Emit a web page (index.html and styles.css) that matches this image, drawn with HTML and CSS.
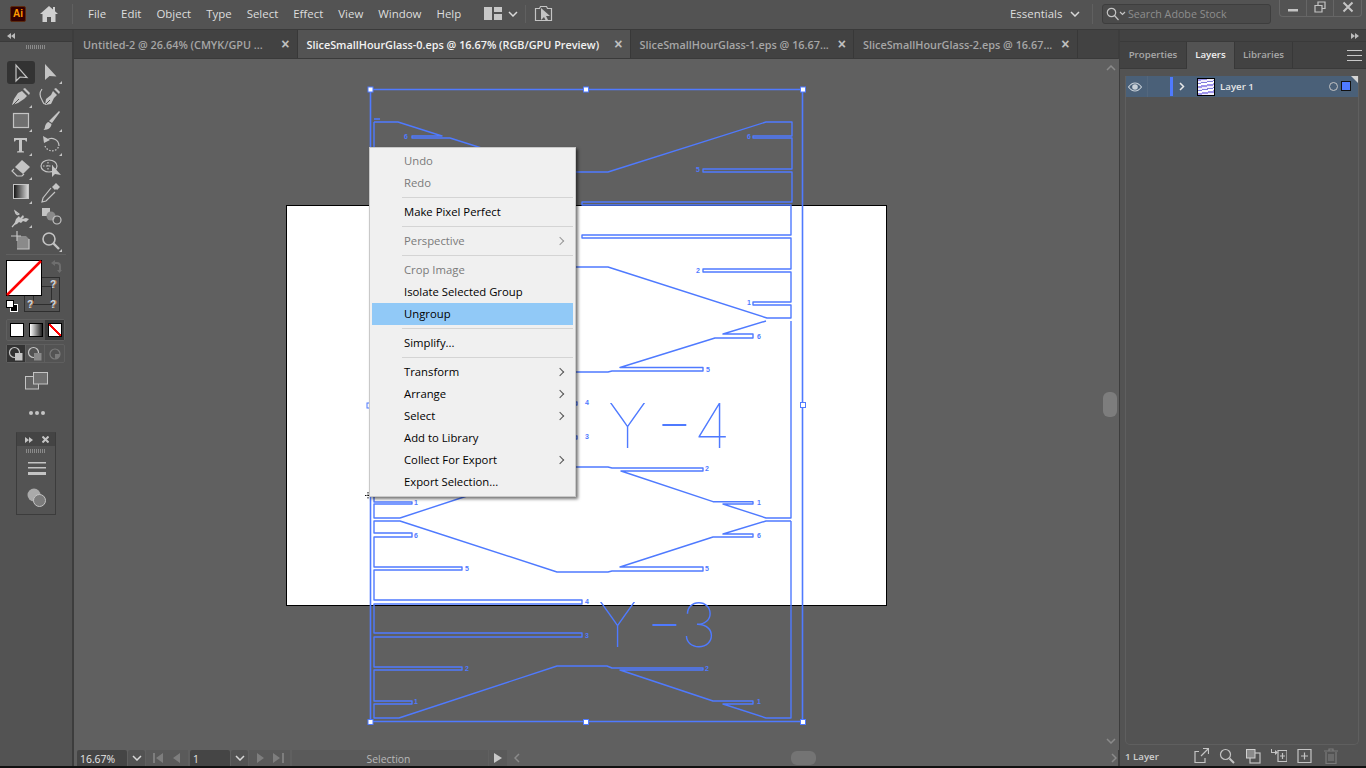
FILE: index.html
```html
<!DOCTYPE html>
<html lang="en">
<head>
<meta charset="utf-8">
<title>Adobe Illustrator</title>
<link rel="stylesheet" href="styles.css">
</head>
<body>
<div class="app">
  <header class="topbar">
    <div class="ai-logo">Ai</div>
    <svg class="home" width="18" height="16" viewBox="0 0 18 16"><path d="M9 0 0 8h2.500v8h4.500v-5h4v5h4.500V8H18l-3-2.700V1h-2v2.500z"/></svg>
    <div class="vsep first"></div>
    <nav class="menubar">
      <span>File</span><span>Edit</span><span>Object</span><span>Type</span><span>Select</span><span>Effect</span><span>View</span><span>Window</span><span>Help</span>
    </nav>
    <svg class="wsp" width="18" height="13" viewBox="0 0 18 13"><path d="M0 0h8v13H0zM10 0h8v5h-8zM10 7h8v6h-8z"/></svg>
    <svg class="chev wsp-chev" width="10" height="6" viewBox="0 0 10 6"><path d="M1 1l4 4 4-4"/></svg>
    <div class="vsep arr-sep"></div>
    <svg class="arr" width="19" height="17" viewBox="0 0 19 17"><path class="ln" d="M1.500 3.500h4l1-2h6l1 2h4v12h-16z"/><path class="fl" d="M7 3l0 12 3-3 2 4 2-1-2-4h4z"/></svg>
    <div class="top-right">
      <span class="essentials">Essentials</span>
      <svg class="chev" width="10" height="6" viewBox="0 0 10 6"><path d="M1 1l4 4 4-4"/></svg>
      <div class="vsep ess-sep"></div>
      <div class="search">
        <svg width="20" height="14" viewBox="0 0 20 14"><circle cx="5.500" cy="5.500" r="4.200" class="ln"/><path class="ln" d="M8.500 8.500l4 4.500M14 5l2.500 2.500L19 5"/></svg>
        <span>Search Adobe Stock</span>
      </div>
      <div class="winbtns">
        <div class="winbtn"><svg width="12" height="12" viewBox="0 0 12 12"><path d="M1 8h10v2.500H1z"/></svg></div>
        <div class="winbtn"><svg width="12" height="12" viewBox="0 0 12 12"><path class="ln" d="M1 4.500h7v6.500H1zM4 4V1h7v6.500H8.500"/></svg></div>
        <div class="winbtn"><svg width="12" height="12" viewBox="0 0 12 12"><path class="ln thick" d="M1.500 1.500l9 9M10.500 1.500l-9 9"/></svg></div>
      </div>
    </div>
  </header>

  <div class="work">
    <aside class="tools">
      <div class="strip"><svg width="8" height="6" viewBox="0 0 8 6"><path d="M4 0v6L0 3zM8 0v6L4 3z"/></svg></div>
      <div class="grip"></div>
      <div class="toolgrid">
        <div class="tool sel"><svg width="24" height="24" viewBox="0 0 24 24"><path class="ln" d="M7 4V20l4-4 7 .5z"/></svg></div>
        <div class="tool"><svg width="24" height="24" viewBox="0 0 24 24"><path d="M6 3v16l4.500-4 7 .5z"/><path class="tri" d="M23 23h-3l3-3z"/></svg></div>
        <div class="tool"><svg width="24" height="24" viewBox="0 0 24 24"><path d="M13 6l5 5-3 3-6 4-6 2 2-6 4-6zM14 4l2-1 5 5-1 2z"/><path class="cut" d="M4 20l6-6"/><path class="tri" d="M23 23h-3l3-3z"/></svg></div>
        <div class="tool"><svg width="24" height="24" viewBox="0 0 24 24"><path d="M14 6l4 4-3 3-3 6-6 1 1-6 5-4zM15 4l2-1 4 4-1 2z"/><path class="cut" d="M7 19l4-4"/><path class="ln" d="M3 4C0 8 1 12 3 15c1 2 1 4 3 4"/></svg></div>
        <div class="tool"><svg width="24" height="24" viewBox="0 0 24 24"><rect x="4.500" y="4.500" width="15" height="14" class="rectfill"/><path class="tri" d="M23 23h-3l3-3z"/></svg></div>
        <div class="tool"><svg width="24" height="24" viewBox="0 0 24 24"><path d="M20 2l1 1-8 11-3-2zM9.500 13l3 2c0 3-3 6-8 6 2-2 1-3 2-5 .5-1.500 2-3 3-3z"/><path class="tri" d="M23 23h-3l3-3z"/></svg></div>
        <div class="tool"><svg width="24" height="24" viewBox="0 0 24 24"><path d="M5 5h13v3.500h-1l-1-1.500h-3v11l2 .5v1H8v-1l2-.5V7H7L6 8.500H5z"/><path class="tri" d="M23 23h-3l3-3z"/></svg></div>
        <div class="tool"><svg width="24" height="24" viewBox="0 0 24 24"><path class="ln dots" d="M6 13a7.500 7.500 0 0 0 14 0"/><path class="ln" d="M20 13a7.500 7.500 0 0 0-12-6"/><path d="M4 3l1 7 6-3z"/><path class="tri" d="M23 23h-3l3-3z"/></svg></div>
        <div class="tool"><svg width="24" height="24" viewBox="0 0 24 24"><path d="M13 3l8 7-7 7-8-7z"/><path class="ln" d="M5 12l-2 2 5 5h5l2-2"/><path class="tri" d="M23 23h-3l3-3z"/></svg></div>
        <div class="tool"><svg width="24" height="24" viewBox="0 0 24 24"><ellipse class="ln" cx="10" cy="9" rx="8" ry="6"/><path class="ln dots" d="M9 5v8M4 9h10"/><path d="M13 8v12l3-3 6 1z"/></svg></div>
        <div class="tool"><svg width="24" height="24" viewBox="0 0 24 24"><defs><linearGradient id="g1"><stop offset="0" stop-color="#111"/><stop offset="1" stop-color="#ddd"/></linearGradient></defs><rect x="4.500" y="3.500" width="15" height="14" fill="url(#g1)" class="frame"/><path class="tri" d="M23 23h-3l3-3z"/></svg></div>
        <div class="tool"><svg width="24" height="24" viewBox="0 0 24 24"><path d="M17 2l4 4-3 3-1-1-1 1-3-3 1-1z"/><path class="ln" d="M12 7L4 17l-1 4 4-1 9-9"/></svg></div>
        <div class="tool"><svg width="24" height="24" viewBox="0 0 24 24"><path d="M5 20l2-6 3-3 1 2 3-3 1 2-2 2 4-1 3 1-3 3-3-1-2 2-2-1-2 2z"/><path class="ln" d="M3 22l8-9M6 6l4 3c-1 1-3 1-4-3z"/><path class="tri" d="M23 23h-3l3-3z"/></svg></div>
        <div class="tool"><svg width="24" height="24" viewBox="0 0 24 24"><rect x="3" y="3" width="8" height="8"/><circle cx="12" cy="11" r="4.500" class="soft"/><circle cx="18" cy="15" r="4" class="ln"/></svg></div>
        <div class="tool"><svg width="24" height="24" viewBox="0 0 24 24"><path class="soft" d="M8 7h9l3 3v10H8z"/><path class="ln" d="M8 2v10M2 7h10M8 20h12V10"/></svg></div>
        <div class="tool"><svg width="24" height="24" viewBox="0 0 24 24"><circle class="ln wide" cx="10" cy="10" r="6"/><path class="ln wide2" d="M14.500 14.500L20 20"/><path class="tri" d="M23 23h-3l3-3z"/></svg></div>
      </div>
      <div class="hr"></div>
      <div class="fillstroke">
        <div class="fillbox"><svg width="36" height="36" viewBox="0 0 36 36"><rect x=".5" y=".5" width="35" height="35" fill="#fff" stroke="#000"/><path d="M1 35L35 1" stroke="#f00" stroke-width="2.500"/></svg></div>
        <div class="strokebox"><span class="q q1">?</span><span class="q q2">?</span><span class="q q3">?</span></div>
        <svg class="swap" width="12" height="13" viewBox="0 0 12 13"><path d="M5 0v2h2c3 0 4 2 4 4v4h1l-2.500 3L7 10h2V6c0-1-1-2-2-2H5v2L1 3z"/></svg>
        <svg class="defaults" width="12" height="12" viewBox="0 0 12 12"><rect x="4.500" y="4.500" width="7" height="7" fill="#000" stroke="#fff"/><rect x=".5" y=".5" width="7" height="7" fill="#fff" stroke="#000"/></svg>
      </div>
      <div class="swatches">
        <div class="sw"><i class="white"></i></div>
        <div class="sw"><i class="grad"></i></div>
        <div class="sw on"><i class="none"></i></div>
      </div>
      <div class="modes">
        <div class="mode on"><svg width="16" height="16" viewBox="0 0 16 16"><circle cx="6.500" cy="6.500" r="5" class="ln"/><rect x="7" y="7" width="7.500" height="7.500"/></svg></div>
        <div class="mode"><svg width="16" height="16" viewBox="0 0 16 16"><circle cx="6.500" cy="6.500" r="5" class="ln"/><rect x="7" y="7" width="7.500" height="7.500" class="soft"/></svg></div>
        <div class="mode dim"><svg width="16" height="16" viewBox="0 0 16 16"><circle cx="8" cy="8" r="5" class="ln"/><path d="M8 8h5a5 5 0 0 1-5 5z"/></svg></div>
      </div>
      <svg class="screen" width="24" height="18" viewBox="0 0 24 18"><rect x=".5" y="4.500" width="13" height="12.500" class="frame2"/><rect x="8.500" y=".5" width="14" height="11.500" class="screenfill"/></svg>
      <div class="dots"><i></i><i></i><i></i></div>
      <div class="mini">
        <div class="mini-h">
          <svg width="8" height="6" viewBox="0 0 8 6"><path d="M0 0v6l4-3zM4 0v6l4-3z"/></svg>
          <svg width="7" height="7" viewBox="0 0 7 7"><path class="ln thick" d="M.5.500l6 6M6.500.500l-6 6"/></svg>
        </div>
        <div class="grip mini-grip"></div>
        <svg class="mini-ic" width="18" height="13" viewBox="0 0 18 13"><path d="M0 0h18v1.500H0zM0 5h18v1.500H0zM0 10h18v3H0z"/></svg>
        <svg class="mini-ic2" width="20" height="20" viewBox="0 0 20 20"><circle cx="7" cy="7" r="6.500"/><circle cx="12.500" cy="12.500" r="6" class="overlap"/></svg>
      </div>
    </aside>

    <main class="center">
      <div class="tabs">
        <div class="tab">
          <span>Untitled-2 @ 26.64% (CMYK/GPU ...</span><b>×</b>
        </div>
        <div class="tab active">
          <span>SliceSmallHourGlass-0.eps @ 16.67% (RGB/GPU Preview)</span><b>×</b>
        </div>
        <div class="tab">
          <span>SliceSmallHourGlass-1.eps @ 16.67...</span><b>×</b>
        </div>
        <div class="tab">
          <span>SliceSmallHourGlass-2.eps @ 16.67...</span><b>×</b>
        </div>
      </div>
      <div class="stage">
        <div class="canvas">
          <svg class="art" width="1029" height="691" viewBox="74 59 1029 691">
            <rect x="286.500" y="205.500" width="600" height="400" fill="#fff" stroke="#000"/>
            <g class="wire">
              <path d="M374 119H380M374 122H398L442 136H412V138H450L557 172H608L766 122H792V136H753V138H792V169H703V172H792V202H582V205H791V235H582V238H791V269H703V272H791V302H753V305H791V318H767L608 267H557"/>
              <path d="M766 321L723 334H753V338H715L620 367.500H703V371H612L608 372H557"/>
              <path d="M374 402H577V405H374M374 436H577V439H374"/>
              <path d="M557 467H608L612 468H703V471H621L713 501.700H753V504H723L766 518H791V321"/>
              <path d="M791 521H766L723 534H753V537H713L620 567H703V571H612L608 572H557L400 521H374V533H412V537H374V567H462V570H374V600H582V604H374V633H582V637H374V667H462V670H374V701H412V704H374V718H399L557 666H607L612 668H703V670H620L713 701H753V704H723L766 718H791V521"/>
              <path d="M400 518H374V504H412V502H374V122M400 518L470 495"/>
              <rect x="370.500" y="89.500" width="432" height="632" class="bbox"/>
            </g>
            <g class="handles">
              <rect x="368" y="87" width="5" height="5"/><rect x="583.500" y="87" width="5" height="5"/><rect x="800.500" y="87" width="5" height="5"/>
              <rect x="367" y="403" width="4" height="5"/><rect x="800.500" y="402.500" width="5" height="5"/>
              <rect x="368" y="719.500" width="5" height="5"/><rect x="583.500" y="719.500" width="5" height="5"/><rect x="800.500" y="719.500" width="5" height="5"/>
            </g>
            <text class="big"><tspan x="608" y="448">Y</tspan><tspan class="dash" x="655" y="452">-</tspan><tspan x="694" y="448">4</tspan></text>
            <text class="big"><tspan x="598" y="647">Y</tspan><tspan class="dash" x="645" y="652">-</tspan><tspan x="681" y="647">3</tspan></text>
            <g class="digits">
              <text x="404" y="139">6</text><text x="747" y="139">6</text><text x="696" y="172">5</text><text x="696" y="273">2</text><text x="747" y="305">1</text><text x="757" y="339">6</text><text x="706" y="372">5</text><text x="585" y="405">4</text><text x="585" y="439">3</text><text x="705" y="471">2</text><text x="757" y="505">1</text><text x="414" y="505">1</text><text x="414" y="538">6</text><text x="757" y="538">6</text><text x="465" y="571">5</text><text x="705" y="571">5</text><text x="585" y="604">4</text><text x="585" y="638">3</text><text x="465" y="671">2</text><text x="705" y="671">2</text><text x="414" y="704">1</text><text x="757" y="704">1</text>
            </g>
            <path class="cursor" d="M368 492v7M365 495.500h6"/>
          </svg>
          <div class="ctxmenu">
            <div class="mi off">Undo</div>
            <div class="mi off">Redo</div>
            <div class="ms"></div>
            <div class="mi">Make Pixel Perfect</div>
            <div class="ms"></div>
            <div class="mi off sub">Perspective</div>
            <div class="ms"></div>
            <div class="mi off">Crop Image</div>
            <div class="mi">Isolate Selected Group</div>
            <div class="mi hot">Ungroup</div>
            <div class="ms"></div>
            <div class="mi">Simplify...</div>
            <div class="ms"></div>
            <div class="mi sub">Transform</div>
            <div class="mi sub">Arrange</div>
            <div class="mi sub">Select</div>
            <div class="mi">Add to Library</div>
            <div class="mi sub">Collect For Export</div>
            <div class="mi">Export Selection...</div>
          </div>
        </div>
        <div class="vscroll">
          <svg class="chev dim" width="10" height="6" viewBox="0 0 10 6"><path d="M1 5l4-4 4 4"/></svg>
          <div class="vthumb"></div>
          <svg class="chev dim" width="10" height="6" viewBox="0 0 10 6"><path d="M1 1l4 4 4-4"/></svg>
        </div>
      </div>
      <footer class="status">
        <div class="field zoom">16.67%</div>
        <div class="cbtn"><svg class="chev" width="10" height="6" viewBox="0 0 10 6"><path d="M1 1l4 4 4-4"/></svg></div>
        <div class="pager"><svg width="30" height="10" viewBox="0 0 30 10"><path d="M1 0h2v10H1zM11 0v10L4 5zM28 0v10l-7-5z"/></svg></div>
        <div class="field page">1</div>
        <div class="cbtn"><svg class="chev" width="10" height="6" viewBox="0 0 10 6"><path d="M1 1l4 4 4-4"/></svg></div>
        <div class="pager next"><svg width="30" height="10" viewBox="0 0 30 10"><path d="M2 0v10l7-5zM18 0v10l7-5zM27 0h2v10h-2z"/></svg></div>
        <div class="selname">Selection</div>
        <div class="playbtn"><svg width="8" height="10" viewBox="0 0 8 10"><path d="M0 0v10l8-5z"/></svg></div>
        <div class="hscroll">
          <svg class="chev dim" width="6" height="10" viewBox="0 0 6 10"><path d="M5 1L1 5l4 4"/></svg>
          <div class="hthumb"></div>
          <svg class="chev dim" width="6" height="10" viewBox="0 0 6 10"><path d="M1 1l4 4-4 4"/></svg>
        </div>
      </footer>
    </main>

    <aside class="dock">
      <div class="strip right"><svg width="8" height="6" viewBox="0 0 8 6"><path d="M0 0v6l4-3zM4 0v6l4-3z"/></svg></div>
      <div class="dtabs">
        <div class="dtab first-tab">Properties</div>
        <div class="dtab active">Layers</div>
        <div class="dtab last-tab">Libraries</div>
        <svg class="dmenu" width="15" height="11" viewBox="0 0 15 11"><path d="M0 0h15v1H0zM0 5h15v1H0zM0 10h15v1H0z"/></svg>
      </div>
      <div class="dbody">
        <div class="layers">
          <div class="layer">
            <svg class="eye" width="14" height="10" viewBox="0 0 14 10"><path d="M7 1C4 1 2 3 .5 5 2 7 4 9 7 9s5-2 6.500-4C12 3 10 1 7 1z" class="eye1"/><circle cx="7" cy="5" r="2.800"/></svg>
            <i class="cell"></i>
            <i class="lbar"></i>
            <svg class="lchev" width="6" height="9" viewBox="0 0 6 9"><path d="M1 1l3.500 3.500L1 8"/></svg>
            <i class="thumb"></i>
            <span class="lname">Layer 1</span>
            <i class="target"></i>
            <i class="selbox"></i>
          </div>
        </div>
        <div class="dfoot">
          <span>1 Layer</span>
          <div class="dicons">
            <svg width="16" height="16" viewBox="0 0 16 16"><path class="ln" d="M6 3.500H2v11h10V10M8 8l7-7M10 .5h5.500V6"/></svg>
            <svg width="16" height="16" viewBox="0 0 16 16"><circle cx="6.500" cy="6.500" r="5" class="ln"/><path class="ln thick" d="M10.500 10.500L15 15"/></svg>
            <svg width="16" height="16" viewBox="0 0 16 16"><rect x="5" y="5" width="10" height="10" class="ln"/><rect x="1.500" y="1.500" width="8.500" height="8.500" class="darkfill"/></svg>
            <svg width="16" height="16" viewBox="0 0 16 16"><path class="ln" d="M7 2.500h9v11H7zM11.500 5v6M9 8h5M0 1.500v0"/><path d="M0 1h1v3h3V2l3 2.500L4 7V5H0z"/></svg>
            <svg width="16" height="16" viewBox="0 0 16 16"><path class="ln" d="M1 1.500h13v13H1zM7.500 4.500v7M4 8h7"/></svg>
            <svg class="trash" width="16" height="16" viewBox="0 0 16 16"><path class="ln" d="M3 4v11.500h10V4M1 3h14M6 3V1h4v2M6 6v7M8 6v7M10 6v7"/></svg>
          </div>
        </div>
      </div>
    </aside>
  </div>
  <div class="baseline"></div>
</div>
</body>
</html>
```
FILE: styles.css
```css
* { box-sizing: border-box; margin: 0; padding: 0; }
html, body { width: 1366px; height: 768px; overflow: hidden; background: #535353; }
body { font-family: "Open Sans", "Noto Sans", "Liberation Sans", sans-serif; font-size: 11.5px; color: #ddd; }
svg { display: block; flex: none; fill: #c4c4c4; }
i { display: block; }
.ln { fill: none; stroke: #c4c4c4; stroke-width: 1.2; }
.fl { fill: #c4c4c4; }
.thick { stroke-width: 2; }
.chev { fill: none; stroke: #d8d8d8; stroke-width: 1.500; }
.chev.dim { stroke: #8a8a8a; }

.app { width: 1366px; height: 768px; display: grid; grid-template-rows: 30px 736px 2px; }
.baseline { background: #111; }

.topbar { display: flex; align-items: center; height: 30px; background: #535353; border-bottom: 1px solid #3a3a3a; position: relative; padding: 0 0 2px 10px; }
.ai-logo { width: 16px; height: 16px; background: #330000; border: 1px solid #5a2a10; border-radius: 2px; color: #ff9a00; font: bold 10px/14px "Liberation Sans", sans-serif; text-align: center; }
.home { margin-left: 14px; fill: #cfcfcf; }
.vsep { width: 1px; height: 20px; background: #606060; }
.vsep.first { margin-left: 14px; }
.menubar { display: flex; gap: 15px; margin-left: 15px; font-size: 11.450px; color: #dedede; width: 386px; }
.wsp { margin-left: 10px; fill: #c8c8c8; }
.wsp-chev { margin-left: 6px; }
.arr-sep { margin-left: 7px; height: 18px; }
.arr { margin-left: 8px; }
.top-right { margin-left: auto; display: flex; align-items: center; }
.essentials { font-size: 11.450px; color: #dedede; width: 60px; }
.top-right .chev { margin-left: 0; }
.ess-sep { margin-left: 12px; }
.search { margin-left: 9px; width: 169px; height: 20px; background: #4a4a4a; border: 1px solid #3e3e3e; border-radius: 3px; display: flex; align-items: center; padding-left: 3px; gap: 2px; color: #8e8e8e; font-size: 10.700px; }
.winbtns { margin: -12px 4px 0 8px; display: flex; height: 18px; border: 1px solid #666; border-top: 0; border-radius: 0 0 4px 4px; }
.winbtn { width: 27px; display: flex; align-items: center; justify-content: center; border-right: 1px solid #666; }
.winbtn:last-child { border-right: 0; }

.work { display: flex; height: 736px; }

.tools { width: 74px; flex: none; background: #535353; border-right: 2px solid #3d3d3d; position: relative; }
.strip { height: 12px; background: #424242; border-bottom: 1px solid #3a3a3a; display: flex; align-items: center; padding-left: 7px; }
.strip svg { fill: #bbb; }
.strip.right { justify-content: flex-end; padding-right: 7px; }
.grip { width: 20px; height: 4px; margin: 3px auto 0; background: repeating-linear-gradient(90deg, #8a8a8a 0 1px, transparent 1px 2px); }
.toolgrid { display: grid; grid-template-columns: 30px 30px; grid-auto-rows: 24px; margin: 12px 0 0 6px; }
.tool { display: flex; align-items: center; justify-content: center; position: relative; }
.tool.sel::before { content: ""; position: absolute; left: 1px; top: 0; width: 28px; height: 23px; background: #333; border-radius: 3px; }
.tool svg { position: relative; }
.tri { fill: #c4c4c4; }
.cut { fill: none; stroke: #535353; stroke-width: 1; }
.ln.dots { stroke-dasharray: 1.500 1.500; }
.rectfill { fill: #707070; stroke: #c4c4c4; stroke-width: 1.200; }
.frame { stroke: #c4c4c4; stroke-width: 1; }
.soft { fill: #8a8a8a; }
.wide { stroke-width: 1.600; }
.wide2 { stroke-width: 2.400; }
.hr { height: 1px; margin: 1px 6px 0; background: #606060; }

.fillstroke { position: relative; height: 57px; margin-top: 5px; }
.fillbox { position: absolute; left: 6px; top: 0; z-index: 1; }
.strokebox { position: absolute; left: 24px; top: 17px; width: 36px; height: 35px; border: 1px solid #2e2e2e; }
.strokebox::before { content: ""; position: absolute; left: 8px; top: 8px; width: 17px; height: 17px; border: 1px solid #2e2e2e; }
.q { position: absolute; font: bold 10px/10px "Liberation Sans", sans-serif; color: #c9d6e8; text-shadow: 1px 0 #b37b4b; }
.q1 { right: 3px; top: 2px; }
.q2 { left: 2px; bottom: 1px; }
.q3 { right: 3px; bottom: 1px; }
.swap { position: absolute; left: 50px; top: 0; fill: #6e6e6e; }
.defaults { position: absolute; left: 6px; top: 40px; }

.swatches, .modes { display: grid; grid-template-columns: repeat(3, 1fr); margin-left: 6px; width: 59px; border: 1px solid #5f5f5f; border-radius: 2px; }
.swatches { height: 22px; margin-top: 2px; }
.sw { display: flex; align-items: center; justify-content: center; }
.sw.on { background: #3a3a3a; }
.sw i { width: 14px; height: 14px; border: 1px solid #000; }
.white { background: #fff; }
.grad { background: linear-gradient(90deg, #fff, #222); }
.none { background: linear-gradient(to top right, #fff 0 42%, #f00 42% 58%, #fff 58%); }
.modes { height: 19px; margin-top: 3px; }
.mode { display: flex; align-items: center; justify-content: center; border-right: 1px solid #5f5f5f; }
.mode:last-child { border-right: 0; }
.mode.on { background: #333; }
.mode.dim svg { opacity: .35; }
.screen { margin: 9px 0 0 25px; }
.frame2 { fill: #636363; stroke: #c4c4c4; }
.screenfill { fill: #707070; stroke: #c4c4c4; }
.dots { display: flex; gap: 2px; justify-content: center; margin: 21px 0 0 1px; }
.dots i { width: 4px; height: 4px; border-radius: 50%; background: #c4c4c4; }
.mini { width: 40px; height: 83px; margin: 17px 0 0 16px; border: 1px solid #3c3c3c; border-top-color: #444; background: #535353; position: relative; }
.mini-h { height: 13px; background: #444; display: flex; align-items: center; justify-content: space-between; padding: 0 6px 0 8px; }
.mini-h svg { fill: #c4c4c4; }
.mini-grip { margin-top: 3px; }
.mini-ic { margin: 9px 0 0 11px; }
.mini-ic2 { margin: 13px 0 0 10px; fill: #aaa; }
.overlap { fill: #7c7c7c; stroke: #c4c4c4; }

.center { width: 1045px; flex: none; display: flex; flex-direction: column; }
.tabs { height: 29px; flex: none; display: flex; background: #424242; border-bottom: 1px solid #3a3a3a; }
.tab { height: 28px; width: 223.500px; padding: 0 7px 0 9px; display: flex; align-items: center; justify-content: space-between; border-right: 1px solid #383838; color: #a6a6a6; font-weight: 600; font-size: 10.850px; white-space: nowrap; }
.tab.active { width: 333px; background: #535353; color: #f2f2f2; }
.tab b { font: bold 14px/14px "Liberation Sans", sans-serif; color: #c0c0c0; }
.stage { flex: 1; display: flex; min-height: 0; }
.canvas { width: 1029px; flex: none; background: #606060; position: relative; overflow: hidden; }
.art { position: absolute; left: 0; top: 0; }
.wire path, .wire .bbox { fill: none; stroke: #4f7aff; stroke-width: 1.400; stroke-linejoin: round; }
.wire .bbox { stroke-width: 1.600; }
.handles rect { fill: #fff; stroke: #4f7aff; stroke-width: 1; }
.big { font-family: Inter, "Open Sans", sans-serif; font-weight: 100; font-size: 61px; fill: #4f7aff; }
.big .dash { font-size: 88px; }
.digits text { font: bold 7px "Liberation Sans", sans-serif; fill: #4f7aff; }
.cursor { fill: none; stroke: #111; stroke-width: 1; stroke-dasharray: 1.500 1; }

.ctxmenu { position: absolute; left: 295px; top: 88px; width: 207px; height: 350px; padding: 2px; background: #f0f0f0; border: 1px solid #c9c9c9; box-shadow: 2px 2px 3px rgba(0,0,0,.55); color: #000; font-size: 11.300px; }
.mi { height: 22px; line-height: 22px; padding-left: 32px; position: relative; white-space: nowrap; }
.mi.off { color: #7a7a7a; }
.mi.hot { background: #91c9f7; }
.mi.sub::after { content: ""; position: absolute; right: 10px; top: 8px; width: 5px; height: 5px; border-top: 1.200px solid #555; border-right: 1.200px solid #555; transform: rotate(45deg); }
.mi.off.sub::after { border-color: #999; }
.ms { height: 7px; margin-left: 30px; position: relative; }
.ms::before { content: ""; position: absolute; left: 0; right: 0; top: 3px; height: 1px; background: #d4d4d4; }

.vscroll { flex: 1; background: #606060; display: flex; flex-direction: column; align-items: center; justify-content: space-between; padding: 6px 0; position: relative; }
.vthumb { position: absolute; left: 0; top: 333px; width: 14px; height: 25px; border-radius: 6px; background: #7d7d7d; }

.status { height: 16px; flex: none; display: flex; background: #606060; padding-left: 3px; gap: 1px; align-items: stretch; font-size: 10.400px; }
.field { background: #454545; color: #e8e8e8; padding-left: 3px; line-height: 19px; border-radius: 2px 2px 0 0; }
.zoom { width: 50px; }
.page { width: 40px; margin-left: 1px; }
.cbtn { width: 17px; background: #535353; display: flex; align-items: center; justify-content: center; border-radius: 2px 2px 0 0; }
.pager { width: 42px; background: #5a5a5a; padding: 3px 0 0 6px; }
.pager.next { margin-left: 0; width: 41px; }
.pager svg { fill: #7e7e7e; }
.selname { width: 196px; margin-left: 1px; background: #5a5a5a; text-align: center; color: #b8b8b8; line-height: 19px; padding-right: 3px; }
.playbtn { width: 18px; background: #5a5a5a; display: flex; align-items: center; justify-content: center; }
.playbtn svg { fill: #c8c8c8; }
.hscroll { flex: 1; display: flex; align-items: center; justify-content: space-between; padding: 0 2px 0 6px; position: relative; }
.hthumb { position: absolute; left: 283px; top: 1px; width: 25px; height: 14px; border-radius: 6px; background: #747474; }

.dock { flex: 1; background: #535353; border-left: 2px solid #3d3d3d; margin-left: -1px; display: flex; flex-direction: column; }
.dtabs { height: 27px; flex: none; display: flex; background: #424242; position: relative; border-bottom: 1px solid #3a3a3a; }
.dtab { width: 48px; text-align: center; line-height: 26px; border-right: 1px solid #383838; color: #a8a8a8; font-weight: 600; font-size: 9.700px; }
.first-tab { width: 67px; }
.last-tab { width: 58px; }
.dtab.active { background: #535353; color: #f0f0f0; height: 27px; }
.dmenu { position: absolute; right: 4px; top: 8px; fill: #c8c8c8; }
.dbody { flex: 1; display: flex; flex-direction: column; padding: 7px 7px 0 5px; }
.layers { flex: 1; border: 1px solid #5f5f5f; border-top: 0; border-radius: 0 0 5px 5px; }
.layer { height: 21px; background: #4a6078; display: flex; align-items: center; position: relative; }
.eye { margin-left: 2px; fill: #c8d0d8; }
.eye1 { fill: none; stroke: #c8d0d8; stroke-width: 1.200; }
.cell { width: 1px; height: 21px; background: #53677d; margin-left: 5px; }
.lbar { width: 3px; height: 19px; background: #4f7aff; margin-left: 22px; }
.lchev { margin-left: 6px; fill: none; stroke: #e8e8e8; stroke-width: 1.500; }
.thumb { width: 18px; height: 18px; margin-left: 12px; border: 1px solid #000; background: repeating-linear-gradient(170deg, #9d93ea 0 2px, #f2eefc 2px 4px, #7f7cdc 4px 5px, #fff 5px 7px); }
.lname { margin-left: 5px; font-size: 9.700px; font-weight: 600; color: #e6e6e6; }
.target { position: absolute; right: 20px; top: 6px; width: 9px; height: 9px; border: 1px solid #c4c4c4; border-radius: 50%; }
.selbox { position: absolute; right: 8px; top: 5px; width: 8px; height: 8px; margin-top: 1px; background: #4f7aff; outline: 1px solid #111; }
.layer::after { content: ""; position: absolute; right: 0; top: 0; border-top: 7px solid #d4d4d4; border-left: 7px solid transparent; }
.dfoot { height: 20px; flex: none; display: flex; align-items: center; font-size: 9.700px; font-weight: 600; color: #cfcfcf; margin-top: 1px; }
.dfoot span { width: 70px; }
.dicons { display: flex; gap: 10px; margin-left: -2px; }
.darkfill { fill: #8a8a8a; stroke: #d0d0d0; }
.trash { opacity: .35; }
```
